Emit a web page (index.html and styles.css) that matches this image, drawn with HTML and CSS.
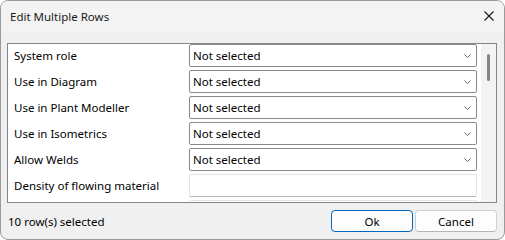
FILE: index.html
```
<!DOCTYPE html>
<html lang="en">
<head>
    <meta charset="UTF-8">
    <meta name="viewport" content="width=device-width, initial-scale=1.0">
    <title>Edit Multiple Rows</title>
    <link rel="stylesheet" href="styles.css">
</head>
<body>
    <div class="window">
        <div class="titlebar">
            <span class="title">Edit Multiple Rows</span>
            <button class="close-btn" title="Close">
                <svg width="10" height="10" viewBox="0 0 10 10">
                    <path d="M0.5 0.5 L9.5 9.5 M9.5 0.5 L0.5 9.5" stroke="#1a1a1a" stroke-width="1.1" fill="none"/>
                </svg>
            </button>
        </div>

        <div class="body">
            <div class="panel">
                <div class="rows">
                    <div class="row">
                        <span class="label">System role</span>
                        <div class="combo"><span>Not selected</span><svg class="chev" width="7" height="4" viewBox="0 0 7 4"><path d="M0.5 0.5 L3.5 3.5 L6.5 0.5" stroke="#6a6a6a" fill="none"/></svg></div>
                    </div>
                    <div class="row">
                        <span class="label">Use in Diagram</span>
                        <div class="combo"><span>Not selected</span><svg class="chev" width="7" height="4" viewBox="0 0 7 4"><path d="M0.5 0.5 L3.5 3.5 L6.5 0.5" stroke="#6a6a6a" fill="none"/></svg></div>
                    </div>
                    <div class="row">
                        <span class="label">Use in Plant Modeller</span>
                        <div class="combo"><span>Not selected</span><svg class="chev" width="7" height="4" viewBox="0 0 7 4"><path d="M0.5 0.5 L3.5 3.5 L6.5 0.5" stroke="#6a6a6a" fill="none"/></svg></div>
                    </div>
                    <div class="row">
                        <span class="label">Use in Isometrics</span>
                        <div class="combo"><span>Not selected</span><svg class="chev" width="7" height="4" viewBox="0 0 7 4"><path d="M0.5 0.5 L3.5 3.5 L6.5 0.5" stroke="#6a6a6a" fill="none"/></svg></div>
                    </div>
                    <div class="row">
                        <span class="label">Allow Welds</span>
                        <div class="combo"><span>Not selected</span><svg class="chev" width="7" height="4" viewBox="0 0 7 4"><path d="M0.5 0.5 L3.5 3.5 L6.5 0.5" stroke="#6a6a6a" fill="none"/></svg></div>
                    </div>
                    <div class="row">
                        <span class="label">Density of flowing material</span>
                        <div class="textbox"></div>
                    </div>
                    <div class="row">
                        <span class="label"></span>
                        <div class="textbox"></div>
                    </div>
                </div>
                <div class="scrollbar">
                    <div class="thumb"></div>
                </div>
            </div>
        </div>

        <div class="footer">
            <span class="status">10 row(s) selected</span>
            <div class="buttons">
                <button class="btn btn-default">Ok</button>
                <button class="btn">Cancel</button>
            </div>
        </div>
    </div>
</body>
</html>
```

FILE: styles.css
```
html, body {
    margin: 0;
    padding: 0;
}
body {
    font-family: "Noto Sans", "Liberation Sans", sans-serif;
    font-size: 11.5px;
    color: #000;
    background-color: #ffffff;
}
.window {
    width: 505px;
    height: 240px;
    box-sizing: border-box;
    border: 1px solid #9a9a9a;
    border-radius: 8px;
    background-color: #f0f0f0;
    overflow: hidden;
    display: flex;
    flex-direction: column;
}
.titlebar {
    height: 30px;
    flex: none;
    display: flex;
    align-items: center;
    justify-content: space-between;
    padding-left: 9px;
    background-color: #f3f3f3;
}
.title {
    color: #1a1a1a;
}
.close-btn {
    width: 30px;
    height: 30px;
    border: none;
    background: transparent;
    padding: 0;
    display: flex;
    align-items: center;
    justify-content: center;
}
.body {
    padding: 12px 7px 0 6px;
}
.panel {
    height: 158px;
    border: 1px solid #828790;
    background-color: #fff;
    display: flex;
    overflow: hidden;
}
.rows {
    flex: 1;
    overflow: hidden;
}
.row {
    display: flex;
    align-items: center;
    height: 23px;
    margin-bottom: 3px;
}
.label {
    width: 175px;
    flex: none;
    padding-left: 6px;
}
.combo, .textbox {
    width: 288px;
    height: 23px;
    box-sizing: border-box;
    border-radius: 2px;
    background-color: #fff;
}
.combo {
    border: 1px solid #8a8a8a;
    display: flex;
    align-items: center;
    justify-content: space-between;
    padding: 0 5px 0 3px;
}
.textbox {
    border: 1px solid #e3e3e3;
    border-bottom-color: #b8b8b8;
}
.chev {
    display: block;
}
.scrollbar {
    width: 15px;
    flex: none;
    background-color: #f3f3f3;
}
.thumb {
    width: 3px;
    height: 27px;
    margin: 10px 0 0 6px;
    border-radius: 2px;
    background-color: #858585;
}
.footer {
    flex: 1;
    display: flex;
    align-items: center;
    justify-content: space-between;
    padding: 0 7px;
}
.buttons {
    display: flex;
    gap: 2px;
}
.btn {
    width: 82px;
    height: 22px;
    box-sizing: border-box;
    font-family: inherit;
    font-size: 11.5px;
    color: #000;
    background-color: #fdfdfd;
    border: 1px solid #d0d0d0;
    border-bottom-color: #b5b5b5;
    border-radius: 4px;
    padding: 0;
}
.btn-default {
    border: 1px solid #0067c0;
}
```
